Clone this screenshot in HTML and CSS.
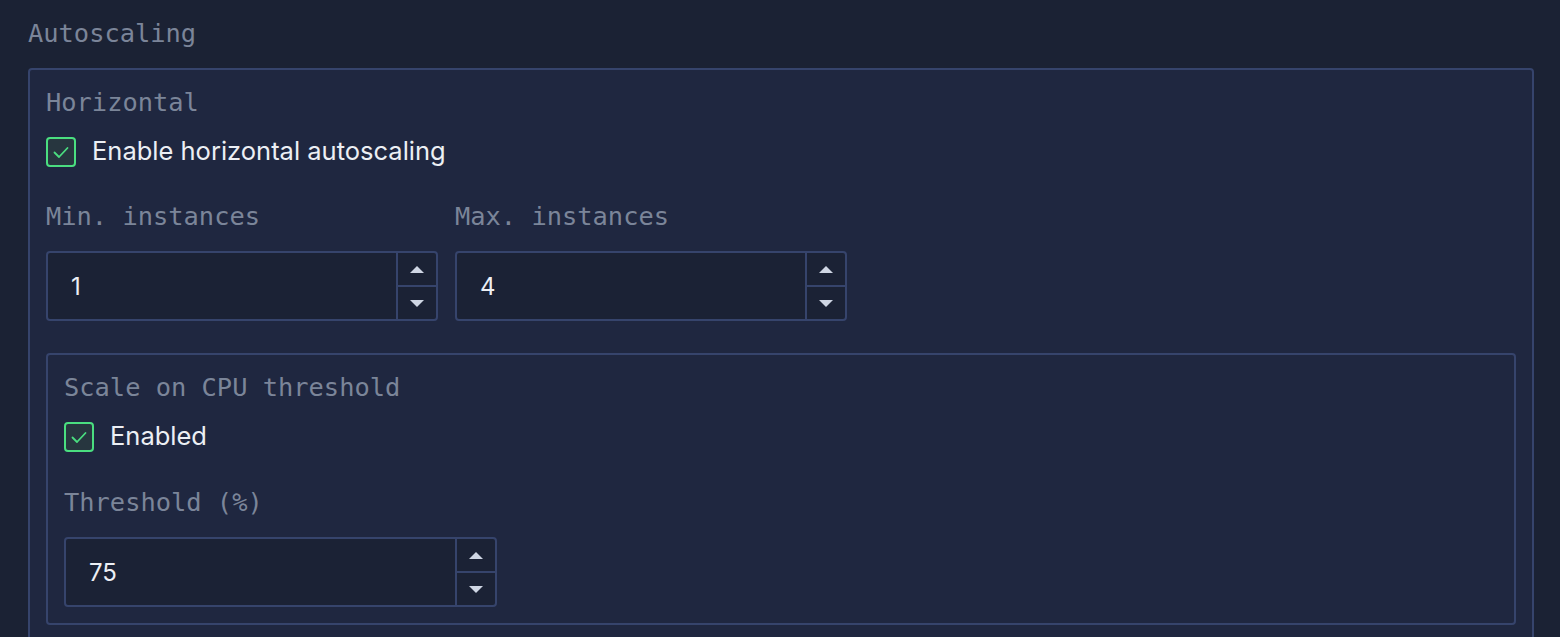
FILE: index.html
```html
<!DOCTYPE html>
<html>
<head>
<meta charset="utf-8">
<link rel="stylesheet" href="styles.css">
</head>
<body>
<div class="page">
  <div class="heading">Autoscaling</div>
  <div class="box outer">
    <div class="legend">Horizontal</div>
    <label class="check">
      <span class="cb"><svg viewBox="0 0 30 30" width="30" height="30"><path d="M8.5 15.5l4.5 4.5 8.5-9" fill="none" stroke="#4ade80" stroke-width="1.8" stroke-linecap="round" stroke-linejoin="round"/></svg></span>
      <span class="check-text">Enable horizontal autoscaling</span>
    </label>
    <div class="fields">
      <div class="field">
        <div class="label">Min. instances</div>
        <div class="num w392">
          <span class="val">1</span>
          <span class="spin"><span class="up"><i class="tri-up"></i></span><span class="down"><i class="tri-down"></i></span></span>
        </div>
      </div>
      <div class="field">
        <div class="label">Max. instances</div>
        <div class="num w392">
          <span class="val">4</span>
          <span class="spin"><span class="up"><i class="tri-up"></i></span><span class="down"><i class="tri-down"></i></span></span>
        </div>
      </div>
    </div>
    <div class="box inner">
      <div class="legend">Scale on CPU threshold</div>
      <label class="check">
        <span class="cb"><svg viewBox="0 0 30 30" width="30" height="30"><path d="M8.5 15.5l4.5 4.5 8.5-9" fill="none" stroke="#4ade80" stroke-width="1.8" stroke-linecap="round" stroke-linejoin="round"/></svg></span>
        <span class="check-text">Enabled</span>
      </label>
      <div class="field single">
        <div class="label">Threshold (%)</div>
        <div class="num w433">
          <span class="val">75</span>
          <span class="spin"><span class="up"><i class="tri-up"></i></span><span class="down"><i class="tri-down"></i></span></span>
        </div>
      </div>
    </div>
  </div>
</div>
</body>
</html>
```
FILE: styles.css
```css
html, body {
  margin: 0;
  padding: 0;
  background: #1b2234;
  overflow: hidden;
}
.page {
  padding: 17px 26px 0 28px;
  font-family: Inter, "Liberation Sans", sans-serif;
  color: #e6e9ef;
}
.heading, .legend, .label {
  font-family: "DejaVu Sans Mono", "Liberation Mono", monospace;
  font-size: 25.4px;
  line-height: 32px;
  color: #7b8599;
  height: 32px;
}
.box {
  border: 2px solid #36446c;
  border-radius: 4px;
  background: #1f2740;
  padding: 16px;
  display: flex;
  flex-direction: column;
}
.outer {
  margin-top: 19px;
  padding-bottom: 16px;
}
.check {
  display: flex;
  align-items: center;
  gap: 16px;
  margin-top: 19px;
  height: 30px;
}
.cb {
  width: 26px;
  height: 26px;
  border: 2px solid #4ade80;
  border-radius: 4px;
  background: #27363f;
  position: relative;
  flex: none;
}
.cb svg {
  position: absolute;
  left: -2px;
  top: -2px;
}
.check-text {
  font-size: 25.5px;
  line-height: 30px;
  color: #eceff4;
  position: relative;
  top: -1px;
}
.fields {
  display: flex;
  gap: 17px;
  margin-top: 33px;
}
.field {
  display: flex;
  flex-direction: column;
}
.field.single {
  margin-top: 34px;
}
.label {
  margin-bottom: 19px;
}
.num {
  height: 66px;
  border: 2px solid #36446c;
  border-radius: 4px;
  background: #1b2235;
  display: flex;
  align-items: stretch;
  box-sizing: content-box;
}
.w392 { width: 388px; }
.w433 { width: 429px; }
.val {
  flex: 1;
  display: flex;
  align-items: center;
  padding-left: 23px;
  font-size: 24px;
  color: #eceff4;
}
.spin {
  width: 38px;
  border-left: 2px solid #36446c;
  display: flex;
  flex-direction: column;
}
.spin .up, .spin .down {
  flex: 1;
  display: flex;
  align-items: center;
  justify-content: center;
}
.spin .up {
  border-bottom: 2px solid #36446c;
}
.tri-up {
  width: 0; height: 0;
  border-left: 7px solid transparent;
  border-right: 7px solid transparent;
  border-bottom: 7px solid #cfd6e4;
}
.tri-down {
  width: 0; height: 0;
  border-left: 7px solid transparent;
  border-right: 7px solid transparent;
  border-top: 7px solid #cfd6e4;
}
.inner {
  margin-top: 32px;
}
```
